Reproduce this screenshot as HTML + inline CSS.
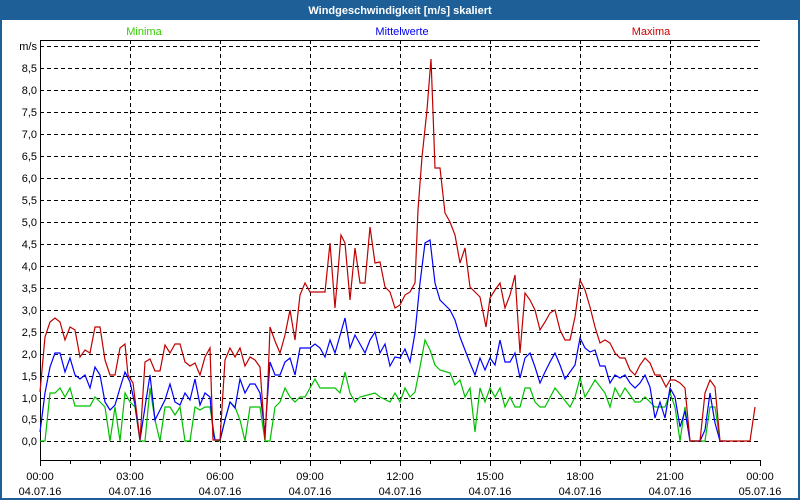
<!DOCTYPE html>
<html><head><meta charset="utf-8"><style>
html,body{margin:0;padding:0;background:#fff}
body{width:800px;height:500px;position:relative;overflow:hidden;font-family:"Liberation Sans",sans-serif}
</style></head><body>
<svg width="800" height="500" xmlns="http://www.w3.org/2000/svg" style="position:absolute;left:0;top:0" font-family="Liberation Sans, sans-serif" font-size="11">
<rect x="0" y="0" width="800" height="500" fill="#1d5f96"/>
<rect x="2" y="20" width="796" height="478" fill="#fff"/>
<text x="400" y="14" fill="#fff" font-weight="bold" text-anchor="middle">Windgeschwindigkeit [m/s] skaliert</text>
<text x="144" y="35" fill="#33cc00" text-anchor="middle">Minima</text>
<text x="402" y="35" fill="#0000ee" text-anchor="middle">Mittelwerte</text>
<text x="651" y="35" fill="#cc0000" text-anchor="middle">Maxima</text>
<g stroke="#000" stroke-dasharray="4,3" stroke-width="1" shape-rendering="crispEdges">
<path d="M40 46.5H760M40 68.5H760M40 90.5H760M40 112.5H760M40 134.5H760M40 156.5H760M40 178.5H760M40 200.5H760M40 222.5H760M40 244.5H760M40 266.5H760M40 288.5H760M40 310.5H760M40 332.5H760M40 354.5H760M40 376.5H760M40 398.5H760M40 419.5H760M40 441.5H760"/>
<path d="M130.5 40V460M220.5 40V460M310.5 40V460M400.5 40V460M490.5 40V460M580.5 40V460M670.5 40V460"/>
</g>
<g stroke="#000" stroke-width="1" shape-rendering="crispEdges" fill="none">
<path d="M40.5 40V460.5H760M40 40.5H760"/>
<path d="M40.5 460v6M70.5 460v4M100.5 460v4M130.5 460v6M160.5 460v4M190.5 460v4M220.5 460v6M250.5 460v4M280.5 460v4M310.5 460v6M340.5 460v4M370.5 460v4M400.5 460v6M430.5 460v4M460.5 460v4M490.5 460v6M520.5 460v4M550.5 460v4M580.5 460v6M610.5 460v4M640.5 460v4M670.5 460v6M700.5 460v4M730.5 460v4M760.5 460v6"/>
</g>
<g fill="#000" text-anchor="end">
<text x="37" y="50">m/s</text><text x="37" y="72">8,5</text><text x="37" y="94">8,0</text><text x="37" y="116">7,5</text><text x="37" y="138">7,0</text><text x="37" y="160">6,5</text><text x="37" y="182">6,0</text><text x="37" y="204">5,5</text><text x="37" y="226">5,0</text><text x="37" y="248">4,5</text><text x="37" y="270">4,0</text><text x="37" y="292">3,5</text><text x="37" y="314">3,0</text><text x="37" y="336">2,5</text><text x="37" y="358">2,0</text><text x="37" y="380">1,5</text><text x="37" y="402">1,0</text><text x="37" y="423">0,5</text><text x="37" y="445">0,0</text>
</g>
<g fill="#000" text-anchor="middle">
<text x="40" y="480">00:00</text><text x="40" y="495">04.07.16</text>
<text x="130" y="480">03:00</text><text x="130" y="495">04.07.16</text>
<text x="220" y="480">06:00</text><text x="220" y="495">04.07.16</text>
<text x="310" y="480">09:00</text><text x="310" y="495">04.07.16</text>
<text x="400" y="480">12:00</text><text x="400" y="495">04.07.16</text>
<text x="490" y="480">15:00</text><text x="490" y="495">04.07.16</text>
<text x="580" y="480">18:00</text><text x="580" y="495">04.07.16</text>
<text x="670" y="480">21:00</text><text x="670" y="495">04.07.16</text>
<text x="760" y="480">00:00</text><text x="760" y="495">05.07.16</text>
</g>
<g fill="none" stroke-width="1.2" stroke-linejoin="miter">
<polyline stroke="#00c000" points="40,441 45,441 50,393 55,393 60,388 65,397 70,388 75,406 90,406 95,397 100,402 105,407 110,441 115,407 120,441 125,393 130,402 135,407 140,441 145,441 150,388 155,420 160,441 165,407 170,407 175,415 180,407 185,441 190,441 195,407 200,410 205,407 210,407 215,440 220,441 225,420 230,402 235,407 240,420 245,441 250,407 260,407 265,441 270,441 275,407 280,402 285,388 290,397 295,402 300,397 305,397 310,388 315,379 320,388 335,388 340,393 345,372 350,393 355,402 360,397 375,393 380,397 390,402 395,393 400,402 405,388 410,397 415,392 420,367 425,340 430,350 435,365 440,370 450,373 455,385 460,380 465,397 470,388 475,432 480,388 485,402 490,388 495,397 500,388 505,407 510,397 515,407 520,407 525,388 530,388 535,402 540,407 545,407 555,388 570,407 575,397 580,378 585,397 595,380 605,393 610,407 615,388 620,397 625,388 635,402 640,402 645,397 655,407 665,407 670,393 675,407 680,441 685,407 690,441 705,441 710,407 715,407 720,441"/>
<polyline stroke="#0000ff" points="40,432 45,393 50,367 55,353 60,353 65,372 70,358 75,375 80,379 85,375 90,388 95,367 100,375 105,402 110,410 115,405 120,388 125,372 130,382 135,405 140,440 145,407 150,375 155,420 160,410 165,400 170,384 175,402 180,405 185,393 190,400 195,379 200,405 205,393 210,397 213,430 215,440 220,440 225,420 230,402 235,408 240,379 245,393 250,384 255,384 260,393 265,433 270,362 275,375 280,375 285,362 290,358 295,375 300,348 310,348 315,344 320,348 325,357 330,340 335,353 345,318 350,348 355,335 360,344 365,353 370,340 375,332 380,353 385,344 390,366 395,357 400,358 405,349 410,362 415,333 420,283 425,243 430,240 435,283 440,300 445,305 450,310 455,320 460,337 465,350 470,363 475,375 480,358 485,370 490,358 495,365 500,340 505,362 510,362 515,353 520,378 525,358 530,353 535,367 540,383 545,372 550,362 555,353 560,365 565,379 570,372 575,365 580,338 585,348 590,352 595,350 600,366 605,366 610,383 615,375 620,378 625,375 630,383 635,388 640,383 645,375 650,387 655,418 660,402 665,418 670,388 675,397 680,427 685,411 690,441 700,441 705,430 710,393 715,423 720,441 725,441"/>
<polyline stroke="#c00000" points="40,392 45,337 50,322 55,318 60,322 65,340 70,327 75,330 80,357 85,350 90,353 95,327 100,327 105,360 110,375 115,375 120,348 125,344 128,375 133,383 140,440 145,362 150,359 155,371 160,371 165,345 170,353 175,344 180,344 185,362 190,366 195,363 200,375 205,357 210,348 213,440 220,440 225,360 230,348 235,357 240,348 245,366 250,357 255,360 260,367 265,440 268,380 270,327 275,341 280,353 285,335 290,310 295,340 300,295 305,283 310,292 325,292 330,243 335,308 341,235 345,243 350,300 355,248 360,283 365,283 370,227 375,263 380,262 385,287 390,292 395,308 400,305 405,295 410,292 415,283 418,210 422,157 427,110 431,59 433,112 435,168 440,168 445,213 450,222 455,235 460,263 465,248 470,287 475,292 480,297 486,327 490,298 495,290 500,283 505,308 510,295 515,275 520,353 525,293 530,300 535,310 540,330 545,322 550,313 555,310 560,330 565,340 570,340 575,317 580,280 585,290 590,307 595,327 600,343 605,340 610,343 615,353 620,358 625,358 630,370 635,375 640,365 645,358 650,363 655,375 660,375 666,387 670,380 675,380 680,383 685,388 690,441 700,441 705,393 710,380 715,387 720,441 750,441 755,407"/>
</g>
</svg>
</body></html>
